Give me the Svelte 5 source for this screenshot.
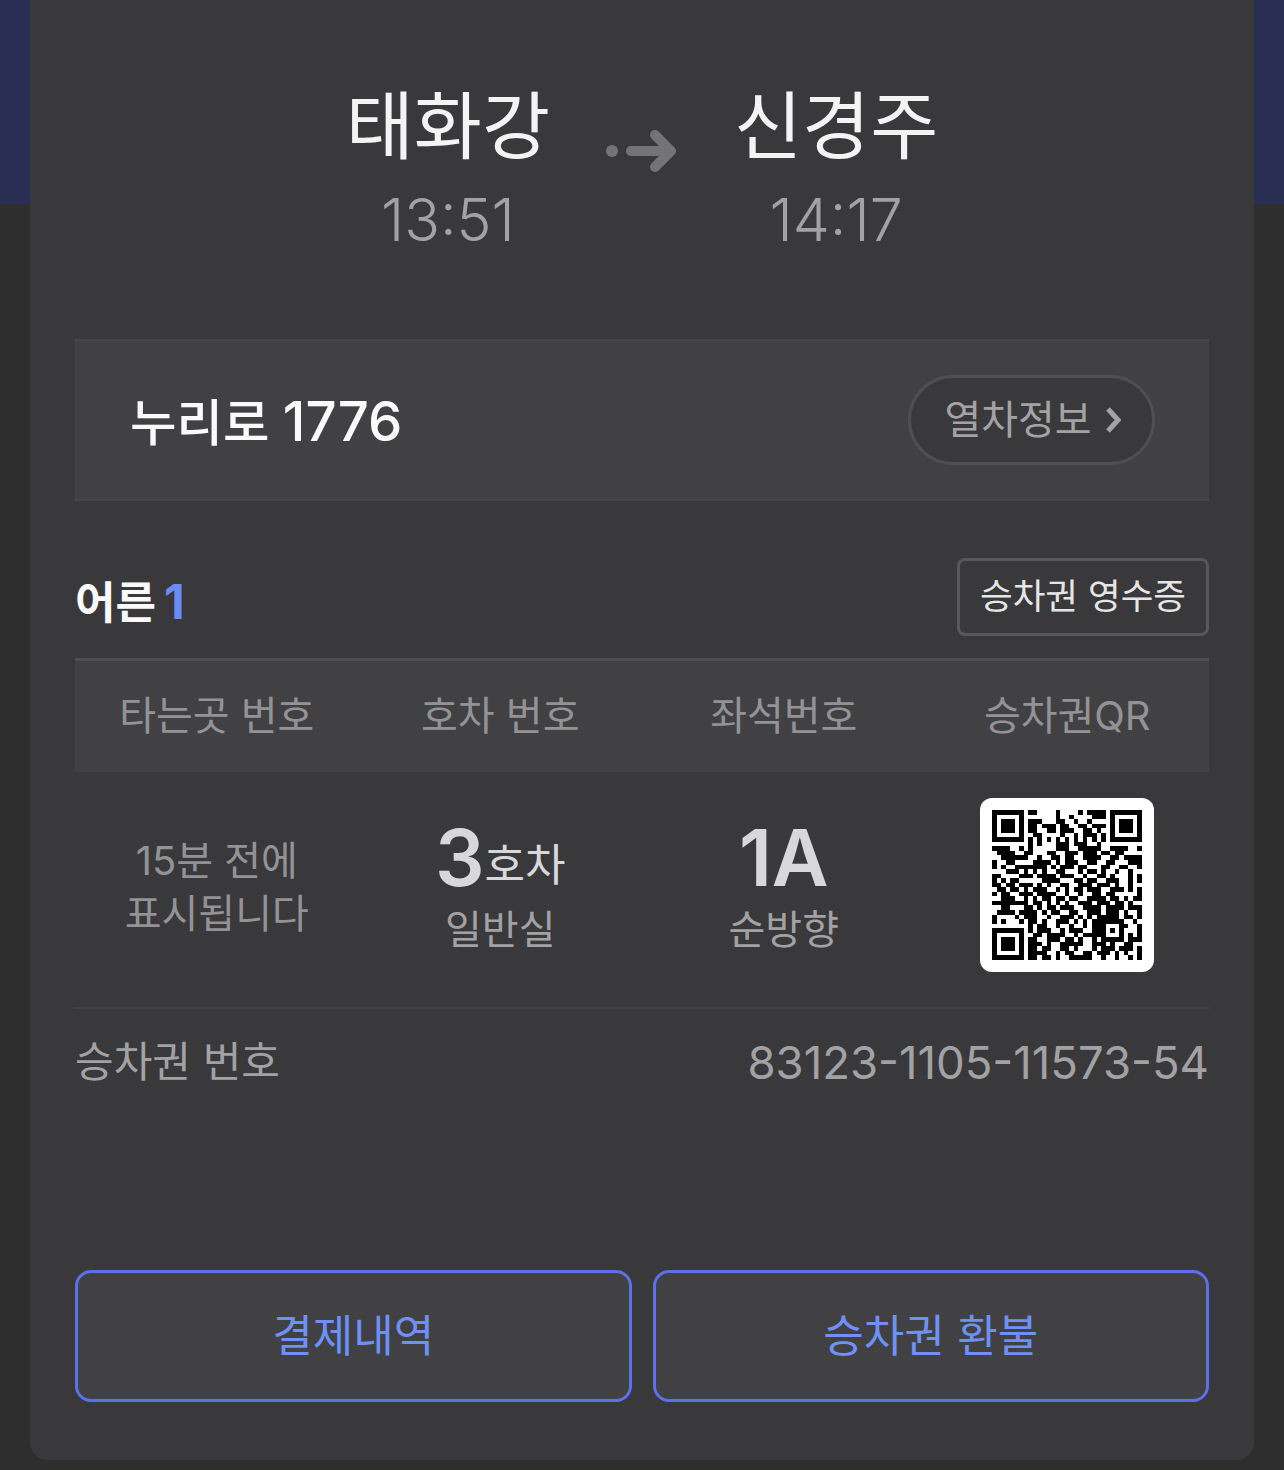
<script>
  // QR modules read off the reference, 33 x 33
  const qrRows = [
    '111111101100001000010111101111111',
    '100000100000001001000011101000001',
    '101110101110001100100100001011101',
    '101110101101110110011011101011101',
    '101110101100110111001101001011101',
    '100000100110000100101110101000001',
    '111111101010101010101010101111111',
    '000000001010001110111001000000000',
    '111100101000001110011111001111001',
    '011110011000110011101110110110000',
    '001111110010011011001111001101111',
    '100110000111101011100110011000111',
    '101001111111010111011000110011001',
    '000111010101001100010110100100100',
    '110000111011110111001001101000101',
    '101011000001111000110110011100101',
    '110110111010100110011101110100100',
    '011011010111001010110111001110101',
    '101100111011110010010011011000001',
    '001110010101101101100111101101011',
    '111111110110101010011101110110100',
    '001100011010110111001111011110111',
    '011110111101011001100111011101001',
    '100001011100100111010101111101101',
    '101000101101001110101011111110010',
    '000000001011001001001011100011001',
    '111111101011100101110011101010001',
    '100000100110111100101111100010101',
    '101110101100111011010010111110111',
    '101110101110100111110011101001100',
    '101110101101100110100010111011101',
    '100000101111001011001101110101001',
    '111111101101101001111100100100101'
  ];
  const qrCells = qrRows.flatMap((row, y) =>
    [...row].map((v, x) => ({ x, y, v })).filter((c) => c.v === '1')
  );
</script>

<div class="page">
  <main class="card">
    <section class="route">
      <div class="station">
        <div class="name">태화강</div>
        <div class="time">13:51</div>
      </div>
      <svg class="arrow" width="72" height="48" viewBox="0 0 72 48">
        <circle cx="6" cy="25" r="6" fill="#747478" />
        <path d="M25 25H64M49 9l16 16-16 16" fill="none" stroke="#747478" stroke-width="10" stroke-linecap="round" stroke-linejoin="round" />
      </svg>
      <div class="station">
        <div class="name">신경주</div>
        <div class="time">14:17</div>
      </div>
    </section>

    <section class="train">
      <div class="train__name">누리로 <span>1776</span></div>
      <button class="train__info">
        열차정보
        <svg width="16" height="28" viewBox="0 0 16 28">
          <path d="M3 3l10 11L3 25" fill="none" stroke="#a3a3a6" stroke-width="5" />
        </svg>
      </button>
    </section>

    <section class="passenger">
      <div class="passenger__count">어른<span>1</span></div>
      <button class="receipt">승차권 영수증</button>
    </section>

    <section class="seats">
      <div class="seats__head">
        <div>타는곳 번호</div>
        <div>호차 번호</div>
        <div>좌석번호</div>
        <div>승차권QR</div>
      </div>
      <div class="seats__body">
        <div class="platform">15분 전에<br />표시됩니다</div>
        <div class="value">
          <div class="value__big">3<small>호차</small></div>
          <div class="value__sub">일반실</div>
        </div>
        <div class="value">
          <div class="value__big">1A</div>
          <div class="value__sub">순방향</div>
        </div>
        <div class="qr">
          <svg width="150" height="150" viewBox="0 0 33 33" shape-rendering="crispEdges">
            {#each qrCells as c}
              <rect x={c.x} y={c.y} width="1" height="1" fill="#000" />
            {/each}
          </svg>
        </div>
      </div>
    </section>

    <section class="ticket-no">
      <div>승차권 번호</div>
      <div class="ticket-no__value">83123-1105-11573-54</div>
    </section>

    <section class="actions">
      <button>결제내역</button>
      <button>승차권 환불</button>
    </section>
  </main>
</div>

<style>
  :global(body) {
    margin: 0;
    font-family: "Inter", "Noto Sans CJK KR", sans-serif;
  }
  button {
    font-family: inherit;
    cursor: pointer;
  }
  .page {
    width: 1284px;
    height: 1470px;
    overflow: hidden;
    background: linear-gradient(#2a2e52 204px, #2e2e2f 204px);
  }
  .card {
    box-sizing: border-box;
    height: 1460px;
    margin: 0 30px;
    padding: 0 45px;
    background: #39393b;
    border-radius: 0 0 18px 18px;
    display: flex;
    flex-direction: column;
  }
  .route {
    height: 339px;
    box-sizing: border-box;
    padding-top: 76px;
    display: flex;
    justify-content: center;
    align-items: flex-start;
    gap: 56px;
  }
  .station {
    text-align: center;
  }
  .name {
    font-size: 74px;
    line-height: 100px;
    color: #f4f4f4;
  }
  .time {
    font-size: 59px;
    font-weight: 300;
    line-height: 72px;
    margin-top: 8px;
    color: #a2a2a5;
  }
  .arrow {
    margin-top: 50px;
  }
  .train {
    box-sizing: border-box;
    height: 162px;
    padding: 0 54px 0 55px;
    display: flex;
    align-items: center;
    justify-content: space-between;
    background: #414143;
    border-top: 2px solid #47474a;
    border-bottom: 2px solid #47474a;
  }
  .train__name {
    padding-bottom: 2px;
    font-size: 50.5px;
    font-weight: 500;
    color: #fafafa;
  }
  .train__name span {
    font-size: 54.5px;
  }
  .train__info {
    box-sizing: border-box;
    width: 247px;
    height: 90px;
    padding: 0 0 6px 2px;
    display: flex;
    align-items: center;
    justify-content: center;
    gap: 13px;
    font-size: 40px;
    color: #a3a3a6;
    background: #39393b;
    border: 3px solid #4f4f52;
    border-radius: 45px;
  }
  .train__info svg {
    margin-top: 6px;
  }
  .passenger {
    height: 157px;
    box-sizing: border-box;
    padding-top: 57px;
    display: flex;
    align-items: flex-start;
    justify-content: space-between;
  }
  .passenger__count {
    font-size: 44px;
    font-weight: 600;
    line-height: 88px;
    color: #fafafa;
  }
  .passenger__count span {
    margin-left: 8px;
    font-size: 48px;
    font-weight: 700;
    color: #6c8cf5;
  }
  .receipt {
    box-sizing: border-box;
    width: 252px;
    height: 78px;
    padding: 0 0 8px;
    font-size: 35.5px;
    color: #e6e6e6;
    background: #39393b;
    border: 3px solid #58585b;
    border-radius: 8px;
  }
  .seats {
    border-top: 3px solid #4f4f52;
    border-bottom: 2px solid #444447;
  }
  .seats__head,
  .seats__body {
    display: grid;
    grid-template-columns: repeat(4, 1fr);
    justify-items: center;
    align-items: center;
    text-align: center;
    box-sizing: border-box;
  }
  .seats__head {
    height: 111px;
    padding-bottom: 8px;
    font-size: 40px;
    color: #939396;
    background: #414143;
  }
  .seats__body {
    height: 235px;
    padding-bottom: 9px;
  }
  .platform {
    margin-top: 3px;
    font-size: 40px;
    line-height: 53px;
    color: #939396;
  }
  .value__big {
    font-size: 78px;
    font-weight: 600;
    line-height: 88px;
    color: #d8d8db;
  }
  .value__big small {
    font-size: 44px;
    font-weight: 400;
    line-height: 1;
    vertical-align: 5px;
  }
  .value__sub {
    margin-top: 2px;
    font-size: 40px;
    line-height: 52px;
    color: #a2a2a5;
  }
  .qr {
    width: 174px;
    height: 174px;
    display: flex;
    align-items: center;
    justify-content: center;
    background: #fff;
    border-radius: 12px;
  }
  .ticket-no {
    height: 261px;
    box-sizing: border-box;
    padding-top: 23px;
    display: flex;
    justify-content: space-between;
    font-size: 42px;
    line-height: 60px;
    color: #a2a2a5;
  }
  .ticket-no__value {
    padding-top: 1px;
    font-size: 45.5px;
  }
  .actions {
    display: grid;
    grid-template-columns: 1fr 1fr;
    gap: 21px;
  }
  .actions button {
    box-sizing: border-box;
    height: 132px;
    padding: 0 0 6px;
    font-size: 44px;
    color: #6f90f5;
    background: #414143;
    border: 3px solid #5b71ea;
    border-radius: 16px;
  }
</style>
